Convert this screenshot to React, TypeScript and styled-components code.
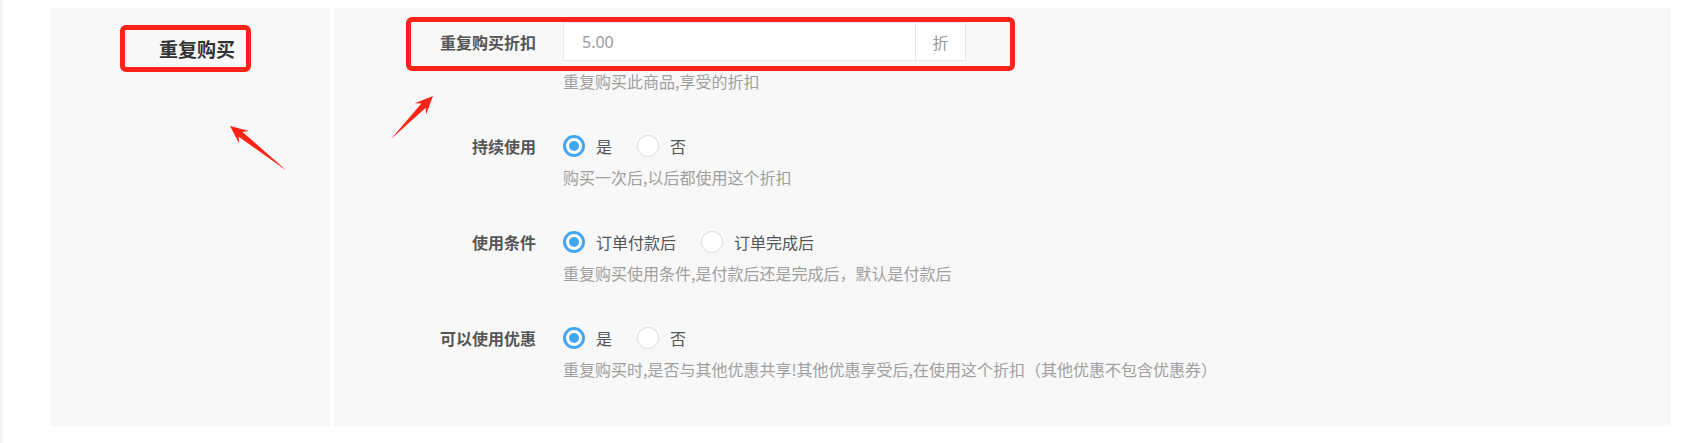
import React from 'react';
import styled, { createGlobalStyle } from 'styled-components';

const GlobalStyle = createGlobalStyle`
  html, body {
    margin: 0;
    padding: 0;
    background: #ffffff;
  }
  body {
    font-family: 'Noto Sans CJK SC', 'Noto Sans', sans-serif;
  }
`;

const Page = styled.div`
  position: relative;
  box-sizing: border-box;
  height: 443px;
  border-left: 3px solid #f3f5f8;
  padding: 8px 23px 17px 48px;
  display: flex;
  gap: 4px;
`;

const SidePanel = styled.div`
  width: 279px;
  flex-shrink: 0;
  background: #f8f8f8;
  box-sizing: border-box;
  padding: 30px 0 0 108px;
`;

const SectionTitle = styled.div`
  font-size: 19px;
  line-height: 22px;
  font-weight: 700;
  color: #333333;
`;

const FormPanel = styled.div`
  flex: 1;
  background: #f8f8f8;
  box-sizing: border-box;
  padding-top: 14px;
`;

const FormGroup = styled.div`
  display: grid;
  grid-template-columns: 202px auto;
  grid-template-areas:
    'label control'
    '. help';
  column-gap: 27px;
  margin-bottom: 43px;
`;

const Label = styled.div`
  grid-area: label;
  align-self: center;
  text-align: right;
  font-size: 16px;
  line-height: 22px;
  font-weight: 700;
  color: #555555;
`;

const Control = styled.div`
  grid-area: control;
  display: flex;
  align-items: center;
`;

const Help = styled.div`
  grid-area: help;
  margin-top: 9px;
  font-size: 16px;
  line-height: 22px;
  color: #a0a0a0;
`;

const InputGroup = styled.div`
  display: flex;
  height: 39px;
`;

const Input = styled.div`
  box-sizing: border-box;
  width: 353px;
  border: 1px solid #e8e8e8;
  background: #ffffff;
  padding-left: 18px;
  display: flex;
  align-items: center;
  font-family: 'Noto Sans', sans-serif;
  font-size: 16px;
  color: #999999;
`;

const Addon = styled.div`
  box-sizing: border-box;
  width: 50px;
  border: 1px solid #e8e8e8;
  border-left: none;
  background: #ffffff;
  display: flex;
  align-items: center;
  justify-content: center;
  font-size: 16px;
  color: #999999;
`;

const RadioOption = styled.label`
  display: flex;
  align-items: center;
  gap: 11px;
  margin-right: 25px;
  font-size: 16px;
  line-height: 22px;
  color: #555555;
`;

const RadioDot = styled.span<{ $checked: boolean }>`
  position: relative;
  box-sizing: border-box;
  width: 22px;
  height: 22px;
  border-radius: 50%;
  background: #ffffff;
  border: ${(p) => (p.$checked ? '3px solid #44a6f2' : '1px solid #dddddd')};

  &::after {
    content: '';
    display: ${(p) => (p.$checked ? 'block' : 'none')};
    position: absolute;
    left: 3px;
    top: 3px;
    width: 10px;
    height: 10px;
    border-radius: 50%;
    background: #44a6f2;
  }
`;

const Highlight = styled.div<{ $x: number; $y: number; $w: number; $h: number }>`
  position: absolute;
  left: ${(p) => p.$x}px;
  top: ${(p) => p.$y}px;
  width: ${(p) => p.$w}px;
  height: ${(p) => p.$h}px;
  box-sizing: border-box;
  border: 5px solid #ff2216;
  border-radius: 6px;
  pointer-events: none;
`;

const ArrowLayer = styled.svg`
  position: absolute;
  left: 0;
  top: 0;
  pointer-events: none;
`;

type Pt = [number, number];

const arrowPoints = (tail: Pt, tip: Pt, headLen = 18, headHalf = 8, shaftHalf = 3) => {
  const dx = tip[0] - tail[0];
  const dy = tip[1] - tail[1];
  const len = Math.hypot(dx, dy);
  const ux = dx / len;
  const uy = dy / len;
  const nx = -uy;
  const ny = ux;
  const at = (back: number, side: number): Pt => [
    tip[0] - ux * back + nx * side,
    tip[1] - uy * back + ny * side,
  ];
  const pts: Pt[] = [
    tail,
    at(headLen * 0.75, shaftHalf),
    at(headLen, headHalf),
    tip,
    at(headLen, -headHalf),
    at(headLen * 0.75, -shaftHalf),
  ];
  return pts.map((p) => `${p[0].toFixed(1)},${p[1].toFixed(1)}`).join(' ');
};

interface Choice {
  text: string;
  checked: boolean;
}

const radioRows: { label: string; choices: Choice[]; help: string }[] = [
  {
    label: '持续使用',
    choices: [
      { text: '是', checked: true },
      { text: '否', checked: false },
    ],
    help: '购买一次后,以后都使用这个折扣',
  },
  {
    label: '使用条件',
    choices: [
      { text: '订单付款后', checked: true },
      { text: '订单完成后', checked: false },
    ],
    help: '重复购买使用条件,是付款后还是完成后，默认是付款后',
  },
  {
    label: '可以使用优惠',
    choices: [
      { text: '是', checked: true },
      { text: '否', checked: false },
    ],
    help: '重复购买时,是否与其他优惠共享!其他优惠享受后,在使用这个折扣（其他优惠不包含优惠券）',
  },
];

const App: React.FC = () => {
  return (
    <>
      <GlobalStyle />
      <Page>
        <SidePanel>
          <SectionTitle>重复购买</SectionTitle>
        </SidePanel>
        <FormPanel>
          <FormGroup>
            <Label>重复购买折扣</Label>
            <Control>
              <InputGroup>
                <Input>5.00</Input>
                <Addon>折</Addon>
              </InputGroup>
            </Control>
            <Help>重复购买此商品,享受的折扣</Help>
          </FormGroup>
          {radioRows.map((row) => (
            <FormGroup key={row.label}>
              <Label>{row.label}</Label>
              <Control>
                {row.choices.map((c) => (
                  <RadioOption key={c.text}>
                    <RadioDot $checked={c.checked} />
                    {c.text}
                  </RadioOption>
                ))}
              </Control>
              <Help>{row.help}</Help>
            </FormGroup>
          ))}
        </FormPanel>

        <Highlight $x={117} $y={25} $w={131} $h={47} />
        <Highlight $x={403} $y={17} $w={609} $h={54} />
        <ArrowLayer width={1694} height={443} viewBox="0 0 1694 443">
          <polygon points={arrowPoints([284, 171], [227, 126])} fill="#ff2216" />
          <polygon points={arrowPoints([388, 139], [430, 96])} fill="#ff2216" />
        </ArrowLayer>
      </Page>
    </>
  );
};

export default App;
